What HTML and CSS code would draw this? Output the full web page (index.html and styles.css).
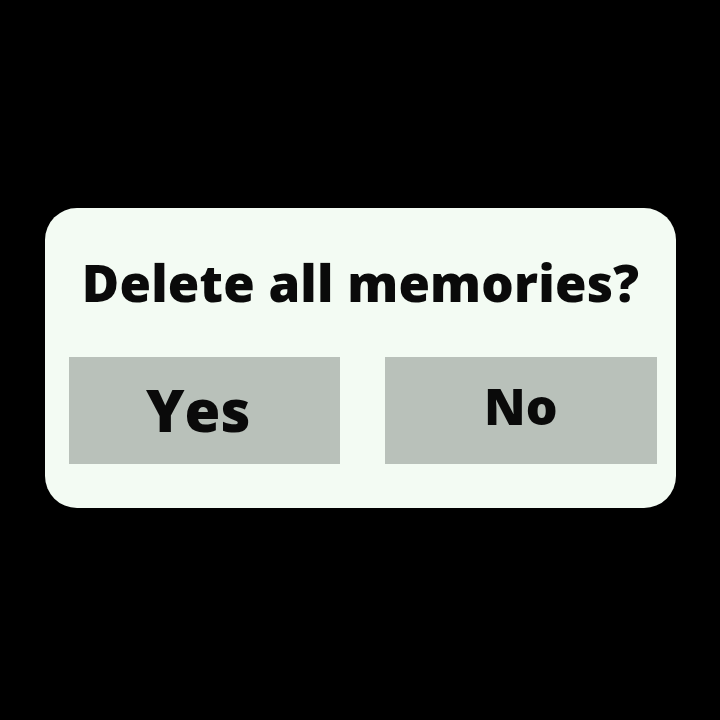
FILE: index.html
```html
<!DOCTYPE html>
<html>
<head>
<meta charset="utf-8">
<link rel="stylesheet" href="styles.css">
</head>
<body>
<div class="screen">
  <div class="dialog">
    <div class="title">Delete all memories?</div>
    <div class="actions">
      <div class="btn btn-yes"><span class="label">Yes</span></div>
      <div class="btn btn-no"><span class="label">No</span></div>
    </div>
  </div>
</div>
</body>
</html>
```

FILE: styles.css
```css
html, body {
  margin: 0;
  padding: 0;
  background: #000;
}
.screen {
  width: 720px;
  height: 720px;
  display: flex;
  align-items: center;
  justify-content: center;
  padding-bottom: 4px;
  box-sizing: border-box;
}
.dialog {
  width: 631px;
  height: 300px;
  box-sizing: border-box;
  background: #f3fbf3;
  border-radius: 32px;
  padding: 0 19px 44px 24px;
  display: flex;
  flex-direction: column;
  font-family: "Open Sans", "DejaVu Sans", sans-serif;
  font-weight: 800;
  color: #0a0a0a;
}
.title {
  height: 149px;
  display: flex;
  align-items: center;
  justify-content: center;
  padding-bottom: 2px;
  padding-right: 4px;
  box-sizing: border-box;
  font-size: 51px;
  letter-spacing: 0.2px;
}
.actions {
  flex: 1;
  display: flex;
  gap: 45px;
}
.btn {
  flex: 1 1 0;
  min-width: 0;
  background: #b9c1ba;
  display: flex;
  justify-content: center;
  align-items: center;
}
.btn-yes {
  font-size: 58px;
}
.btn-yes .label {
  margin-right: 12px;
  margin-bottom: 2px;
}
.btn-no {
  font-size: 50px;
}
.btn-no .label {
  margin-bottom: 10px;
}
```
